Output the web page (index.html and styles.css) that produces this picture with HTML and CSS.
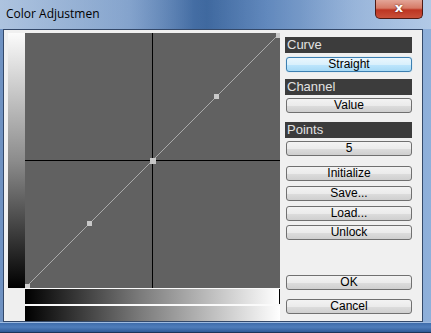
FILE: index.html
```html
<!DOCTYPE html>
<html lang="en">
<head>
    <meta charset="UTF-8">
    <title>Color Adjustmen</title>
    <link rel="stylesheet" href="styles.css">
</head>
<body>
    <div class="window">
        <div class="titlebar">
            <span class="title">Color Adjustmen</span>
            <span class="close">x</span>
        </div>

        <div class="client">
            <!-- Curve editor -->
            <div class="editor">
                <div class="vbar"></div>
                <svg class="graph" width="255" height="255" viewBox="0 0 255 255">
                    <rect width="255" height="255" fill="#616161"/>
                    <line x1="127.5" y1="0" x2="127.5" y2="255" stroke="#000" stroke-width="1"/>
                    <line x1="0" y1="127.5" x2="255" y2="127.5" stroke="#000" stroke-width="1"/>
                    <line x1="0" y1="255" x2="255" y2="0" stroke="#a9a9a9" stroke-width="1"/>
                    <rect x="0" y="251" width="5" height="5" fill="#d0d0d0"/>
                    <rect x="62" y="188" width="5" height="5" fill="#c8c8c8"/>
                    <rect x="125" y="125" width="6" height="6" fill="#c8c8c8"/>
                    <rect x="189" y="61" width="5" height="5" fill="#c8c8c8"/>
                    <rect x="251" y="0" width="5" height="5" fill="#c8c8c8"/>
                </svg>
                <div class="corner"></div>
                <div class="hbars">
                    <div class="hbar top"></div>
                    <div class="hbar"></div>
                </div>
            </div>

            <!-- Side panel -->
            <div class="panel">
                <div class="heading">Curve</div>
                <button class="btn active">Straight</button>
                <div class="heading gap-s">Channel</div>
                <button class="btn">Value</button>
                <div class="heading gap-m">Points</div>
                <button class="btn">5</button>
                <button class="btn gap-l">Initialize</button>
                <button class="btn gap-xs">Save...</button>
                <button class="btn gap-xs">Load...</button>
                <button class="btn gap-xxs">Unlock</button>
                <button class="btn ok">OK</button>
                <button class="btn cancel">Cancel</button>
            </div>
        </div>

        <div class="frame-bottom"></div>
    </div>
</body>
</html>
```

FILE: styles.css
```css
/* General Styling */
body {
    margin: 0;
    padding: 0;
    background-color: #ffffff;
}

.window {
    width: 431px;
    height: 333px;
    overflow: hidden;
    display: flex;
    flex-direction: column;
    background: linear-gradient(90deg, #6f92c2 0%, #6a8ec0 30%, #3d679e 48%, #5680b8 62%, #7fa2d0 82%, #8fb0da 100%);
    position: relative;
}

/* Title bar */
.titlebar {
    height: 29px;
    flex-shrink: 0;
    display: flex;
    align-items: center;
    padding-left: 6px;
    background: linear-gradient(90deg, rgba(215, 228, 242, 0.6) 0%, rgba(190, 210, 232, 0.35) 28%, rgba(0, 0, 0, 0) 45%, rgba(255, 255, 255, 0.1) 70%, rgba(220, 232, 245, 0.45) 100%);
}

.title {
    font-family: "Open Sans", "Noto Sans", sans-serif;
    font-size: 12px;
    color: #000;
    margin-top: -3px;
}

.close {
    position: absolute;
    top: 0;
    left: 375px;
    width: 48px;
    height: 19px;
    box-sizing: border-box;
    border: 1px solid #4e1a14;
    border-top: none;
    border-radius: 0 0 5px 5px;
    background: linear-gradient(to bottom, #e3a597 0%, #d67a66 45%, #bd3522 55%, #c9503a 100%);
    color: #fff;
    font-family: "DejaVu Sans", sans-serif;
    font-weight: bold;
    font-size: 13px;
    line-height: 15px;
    text-align: center;
    text-shadow: 0 0 2px #5a1a10;
}

/* Client area */
.client {
    height: 293px;
    flex-shrink: 0;
    box-sizing: border-box;
    display: flex;
    gap: 5px;
    margin: 0 8px 0 3px;
    background-color: #f0f0f0;
    border: 1px solid #34496a;
    padding: 3px 10px 0 4px;
}

.editor {
    display: grid;
    grid-template-columns: 17px 255px;
    grid-template-rows: 255px 33px;
}

.vbar {
    background: linear-gradient(to bottom, #fbfbfb 0%, #8c8c8c 50%, #000 100%);
}

.graph {
    display: block;
}

.corner {
    background-color: #efefef;
}

.hbars {
    display: flex;
    flex-direction: column;
    gap: 2px;
    padding-top: 1px;
    background-color: #fafafa;
}

.hbar {
    height: 15px;
    background: linear-gradient(to right, #000 0%, #7a7a7a 45%, #fff 100%);
}

.hbar.top {
    border-right: 1px solid #000;
}

/* Bottom window frame */
.frame-bottom {
    height: 11px;
    flex-shrink: 0;
    box-sizing: border-box;
    border-top: 1px solid #9fbbe0;
    border-bottom: 1px solid #1c355a;
    background: linear-gradient(to bottom, #3e6cab 0%, #4f7dbb 45%, #2f5a96 100%);
}

/* Side panel */
.panel {
    width: 127px;
    display: flex;
    flex-direction: column;
    padding-top: 4px;
}

.heading {
    height: 16px;
    background-color: #3c3c3c;
    color: #e2e2e2;
    font-family: "Liberation Sans", Arial, sans-serif;
    font-size: 13px;
    line-height: 16px;
    padding-left: 2px;
    margin-bottom: 4px;
}

.btn {
    height: 15px;
    flex-shrink: 0;
    margin: 0 0 0 1px;
    padding: 0;
    box-sizing: border-box;
    border: 1px solid #707070;
    border-radius: 3px;
    background: linear-gradient(to bottom, #f3f3f3 0%, #ebebeb 50%, #dddddd 51%, #cfcfcf 100%);
    font-family: "Liberation Sans", Arial, sans-serif;
    font-size: 12px;
    line-height: 13px;
    color: #000;
}

.btn.active {
    border-color: #3c7fb1;
    background: linear-gradient(to bottom, #eaf6fd 0%, #d9f0fc 50%, #bee6fd 51%, #a7d9f5 100%);
    box-shadow: 0 0 1px #7ac4ec;
}

.gap-xxs { margin-top: 4px; }
.gap-xs  { margin-top: 5px; }
.gap-s   { margin-top: 7px; }
.gap-m   { margin-top: 9px; }
.gap-l   { margin-top: 10px; }

.heading.gap-s,
.heading.gap-m { margin-bottom: 3px; }

.ok { margin-top: 35px; }
.cancel { margin-top: 9px; }
```
